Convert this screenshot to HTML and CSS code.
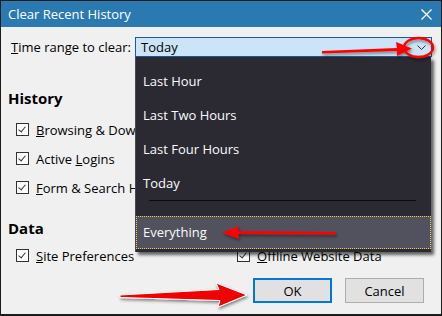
FILE: index.html
```html
<!DOCTYPE html>
<html>
<head>
    <title>Clear Recent History</title>
    <link rel="stylesheet" href="styles.css">
</head>
<body>
    <div class="window">
        <div class="titlebar">
            <span>Clear Recent History</span>
            <svg class="close" width="11" height="11" viewBox="0 0 11 11"><path d="M0.5 0.5L10.5 10.5M10.5 0.5L0.5 10.5" stroke="#fff" stroke-width="1.3"/></svg>
        </div>

        <div class="content">
            <div class="range-row">
                <span class="range-label"><u>T</u>ime range to clear:</span>
                <div class="select">
                    <span>Today</span>
                    <svg width="9" height="5" viewBox="0 0 9 5"><path d="M0.5 0.5L4.5 4.5L8.5 0.5" fill="none" stroke="#333" stroke-width="1"/></svg>
                </div>
            </div>

            <h2 class="section">History</h2>
            <div class="checks">
                <div class="check"><span class="box"></span><span><u>B</u>rowsing &amp; Download History</span></div>
                <div class="check"><span class="box"></span><span><u>C</u>ookies</span></div>
                <div class="check"><span class="box"></span><span>Active <u>L</u>ogins</span></div>
                <div class="check"><span class="box"></span><span>C<u>a</u>che</span></div>
                <div class="check"><span class="box"></span><span><u>F</u>orm &amp; Search History</span></div>
            </div>

            <h2 class="section data">Data</h2>
            <div class="checks">
                <div class="check"><span class="box"></span><span><u>S</u>ite Preferences</span></div>
                <div class="check"><span class="box"></span><span><u>O</u>ffline Website Data</span></div>
            </div>

            <div class="buttons">
                <button class="default">OK</button>
                <button>Cancel</button>
            </div>
        </div>

        <div class="dropdown">
            <div class="option">Last Hour</div>
            <div class="option">Last Two Hours</div>
            <div class="option">Last Four Hours</div>
            <div class="option">Today</div>
            <div class="separator"></div>
            <div class="option selected">Everything</div>
        </div>

        <!-- red annotations drawn over the dialog -->
        <svg class="marks" width="442" height="316" viewBox="0 0 442 316">
            <defs>
                <filter id="shadow" x="-20%" y="-50%" width="140%" height="200%">
                    <feDropShadow dx="1" dy="2" stdDeviation="1.5" flood-color="#000" flood-opacity="0.45"/>
                </filter>
            </defs>
            <g filter="url(#shadow)">
                <polygon points="322,51 397,48 396,42 412,48.5 397,56 397,51 322,53.5" fill="#f00"/>
                <ellipse cx="418.5" cy="47.5" rx="14.5" ry="9.5" fill="none" stroke="#f00" stroke-width="2.5"/>
                <polygon points="336,232 238,231 239,226 222,232.5 239,239 238,234 336,234.5" fill="#f00"/>
                <polygon points="120,295 219,289.5 216,283 247,295 218,307 220,300.5 120,297.5" fill="#f20000" stroke="#fff" stroke-width="1"/>
            </g>
        </svg>
    </div>
</body>
</html>
```

FILE: styles.css
```css
body {
    margin: 0;
    font-family: "Open Sans", "Noto Sans", sans-serif;
    font-size: 13px;
    color: #000;
}
.window {
    position: relative;
    box-sizing: border-box;
    width: 442px;
    height: 316px;
    border: 1px solid #1b1b1b;
    border-bottom-width: 2px;
    background-color: #f0f0f0;
    overflow: hidden;
}
.titlebar {
    height: 26px;
    background-color: #2a7ab1;
    color: #fff;
    display: flex;
    align-items: center;
    justify-content: space-between;
    padding: 0 9px 0 7px;
}
.content {
    padding: 10px 7px 0 7px;
}
.range-row {
    display: flex;
    align-items: center;
    padding-left: 3px;
}
.range-label {
    width: 124px;
}
.select {
    box-sizing: border-box;
    width: 297px;
    height: 20px;
    background-color: #cce4f7;
    border: 1px solid #1c5a93;
    display: flex;
    align-items: center;
    justify-content: space-between;
    padding: 0 5px 0 5px;
}
.section {
    font-size: 15px;
    font-weight: bold;
    line-height: 18px;
    margin: 32px 0 8px 0;
}
.section.data {
    margin: 17px 0 4px 0;
}
.checks {
    display: grid;
    grid-template-columns: 221px auto;
    grid-auto-rows: 29px;
    padding-left: 8px;
}
.check {
    display: flex;
    align-items: center;
    gap: 7px;
    white-space: nowrap;
}
.box {
    box-sizing: border-box;
    width: 13px;
    height: 13px;
    border: 1px solid #333;
    background-color: #fff;
    position: relative;
}
.box::after {
    content: "";
    position: absolute;
    left: 3px;
    top: 1px;
    width: 3px;
    height: 6px;
    border: solid #333;
    border-width: 0 1px 1px 0;
    transform: rotate(40deg);
}
.buttons {
    display: flex;
    justify-content: flex-end;
    gap: 13px;
    margin-top: 8px;
    padding-right: 10px;
}
button {
    box-sizing: border-box;
    width: 79px;
    height: 25px;
    font-family: inherit;
    font-size: 13px;
    background-color: #e1e1e1;
    border: 1px solid #adadad;
    color: #000;
    padding: 0;
}
button.default {
    border: 2px solid #0078d7;
}
.dropdown {
    position: absolute;
    left: 134px;
    top: 56px;
    box-sizing: border-box;
    width: 296px;
    height: 195px;
    padding: 7px 0 2px 0;
    background-color: #2b2a33;
    border-left: 1px solid #4a4952;
    box-shadow: 3px 3px 3px rgba(0, 0, 0, 0.6);
    color: #fbfbfe;
}
.option {
    height: 34px;
    line-height: 34px;
    padding-left: 7px;
}
.separator {
    height: 1px;
    margin: 0 15px 15px 13px;
    background-color: #0c0c0d;
}
.option.selected {
    box-sizing: border-box;
    height: 33px;
    line-height: 31px;
    padding-left: 6px;
    background-color: #52525e;
    border: 1px dotted #e6cf5a;
}
.marks {
    position: absolute;
    left: -1px;
    top: -1px;
    pointer-events: none;
}
```
